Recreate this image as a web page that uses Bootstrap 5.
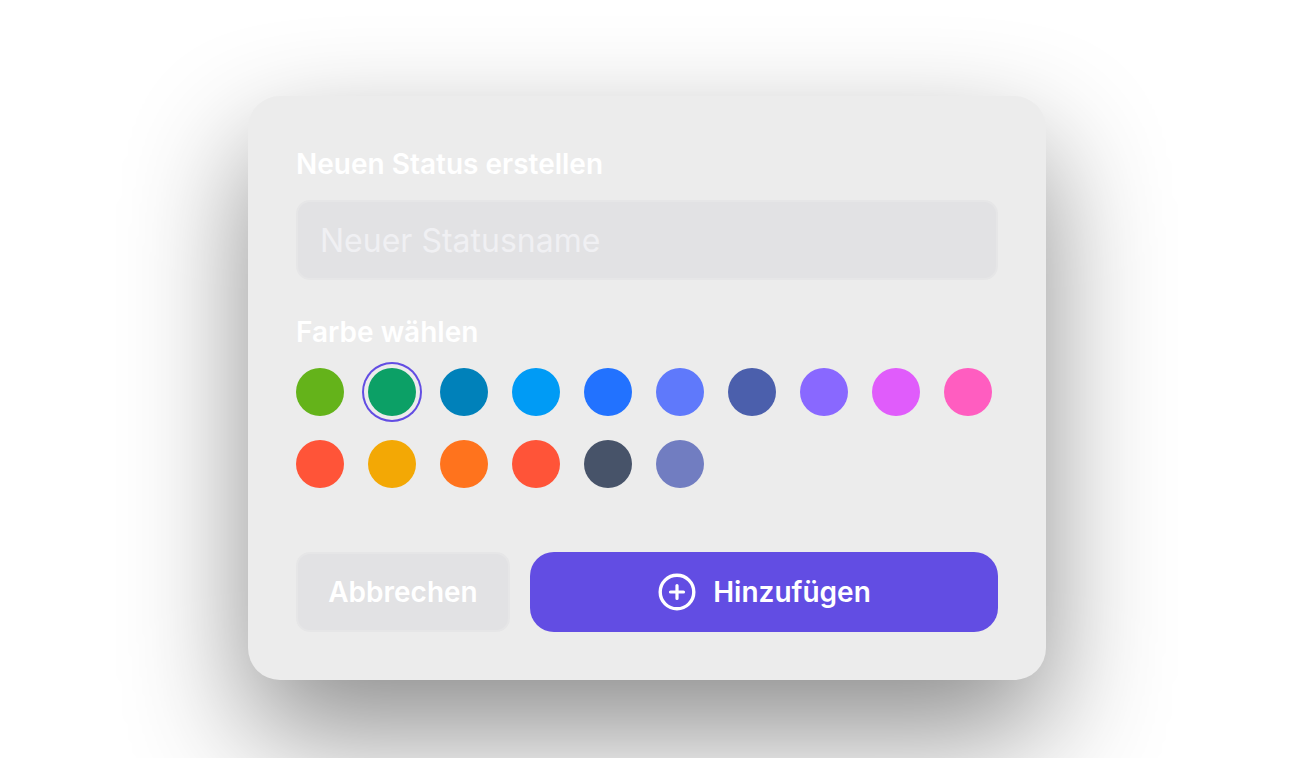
<!DOCTYPE html>
<html lang="de">
<head>
<meta charset="utf-8">
<meta name="viewport" content="width=device-width, initial-scale=1">
<title>Neuen Status erstellen</title>
<link href="https://cdn.jsdelivr.net/npm/bootstrap@5.3.0/dist/css/bootstrap.min.css" rel="stylesheet">
<style>
  body { font-family: Inter, "Liberation Sans", sans-serif; background: #fff; }
  .stage { padding: 96px 2px 0 0; overflow: hidden; }
  .status-dialog { width: 100%; max-width: 798px; padding: 48px; border-radius: 32px; background: #ececec; box-shadow: 0 52px 120px rgba(0, 0, 0, .45); }
  .field-title { font-size: 28px; font-weight: 600; line-height: 40px; color: #fff; }
  .name-input, .name-input:focus { height: 80px; padding: 0 22px; border: 2px solid #e6e6e7; border-radius: 14px; background: #e2e2e4; font-size: 32px; color: #f0f0f3; box-shadow: none; }
  .name-input::placeholder { color: #f0f0f3; opacity: 1; }
  .color-group { margin-top: 32px; margin-bottom: 64px; }
  .swatches { gap: 24px; }
  .swatch { appearance: none; width: 48px; height: 48px; margin: 0; border-radius: 50%; background: var(--tone); cursor: pointer; }
  .swatch:checked { box-shadow: 0 0 0 4px #ececec, 0 0 0 6px #624de3; }
  .actions { gap: 20px; }
  .action, .action:hover { height: 80px; padding: 0; font-size: 28px; font-weight: 600; color: #fff; }
  .cancel, .cancel:hover { width: 214px; border: 2px solid #e6e6e7; border-radius: 14px; background: #e2e2e4; }
  .add, .add:hover { border: 0; border-radius: 24px; background: #624de3; }
</style>
</head>
<body>
<main class="stage d-flex justify-content-center align-items-start min-vh-100">
  <form class="status-dialog">
    <label class="field-title d-block mb-3" for="name">Neuen Status erstellen</label>
    <input class="form-control name-input" id="name" type="text" placeholder="Neuer Statusname">
    <fieldset class="color-group">
      <legend class="field-title mb-3">Farbe wählen</legend>
      <div class="swatches d-flex flex-wrap">
        <input class="swatch" type="radio" name="color" aria-label="Hellgrün" style="--tone:#64b31a">
        <input class="swatch" type="radio" name="color" aria-label="Grün" style="--tone:#0ca066" checked>
        <input class="swatch" type="radio" name="color" aria-label="Petrol" style="--tone:#0081ba">
        <input class="swatch" type="radio" name="color" aria-label="Hellblau" style="--tone:#009bf5">
        <input class="swatch" type="radio" name="color" aria-label="Blau" style="--tone:#2272ff">
        <input class="swatch" type="radio" name="color" aria-label="Kornblume" style="--tone:#5f79fb">
        <input class="swatch" type="radio" name="color" aria-label="Indigo" style="--tone:#4b5fac">
        <input class="swatch" type="radio" name="color" aria-label="Violett" style="--tone:#8968ff">
        <input class="swatch" type="radio" name="color" aria-label="Magenta" style="--tone:#e05cfb">
        <input class="swatch" type="radio" name="color" aria-label="Rosa" style="--tone:#ff5dc0">
        <input class="swatch" type="radio" name="color" aria-label="Rot" style="--tone:#ff5438">
        <input class="swatch" type="radio" name="color" aria-label="Gelb" style="--tone:#f3a805">
        <input class="swatch" type="radio" name="color" aria-label="Orange" style="--tone:#ff731d">
        <input class="swatch" type="radio" name="color" aria-label="Koralle" style="--tone:#ff5438">
        <input class="swatch" type="radio" name="color" aria-label="Schiefer" style="--tone:#475369">
        <input class="swatch" type="radio" name="color" aria-label="Graublau" style="--tone:#717dc1">
      </div>
    </fieldset>
    <div class="actions d-flex">
      <button type="button" class="btn action cancel">Abbrechen</button>
      <button type="submit" class="btn action add flex-grow-1 d-flex align-items-center justify-content-center gap-3">
        <svg width="40" height="40" viewBox="0 0 40 40" fill="none" stroke="#fff" stroke-linecap="round" aria-hidden="true">
          <circle cx="20" cy="20" r="16.8" stroke-width="3.4"/>
          <path d="M20 13.5v13M13.5 20h13" stroke-width="3.2"/>
        </svg>
        Hinzufügen
      </button>
    </div>
  </form>
</main>
<script src="https://cdn.jsdelivr.net/npm/bootstrap@5.3.0/dist/js/bootstrap.bundle.min.js"></script>
</body>
</html>
